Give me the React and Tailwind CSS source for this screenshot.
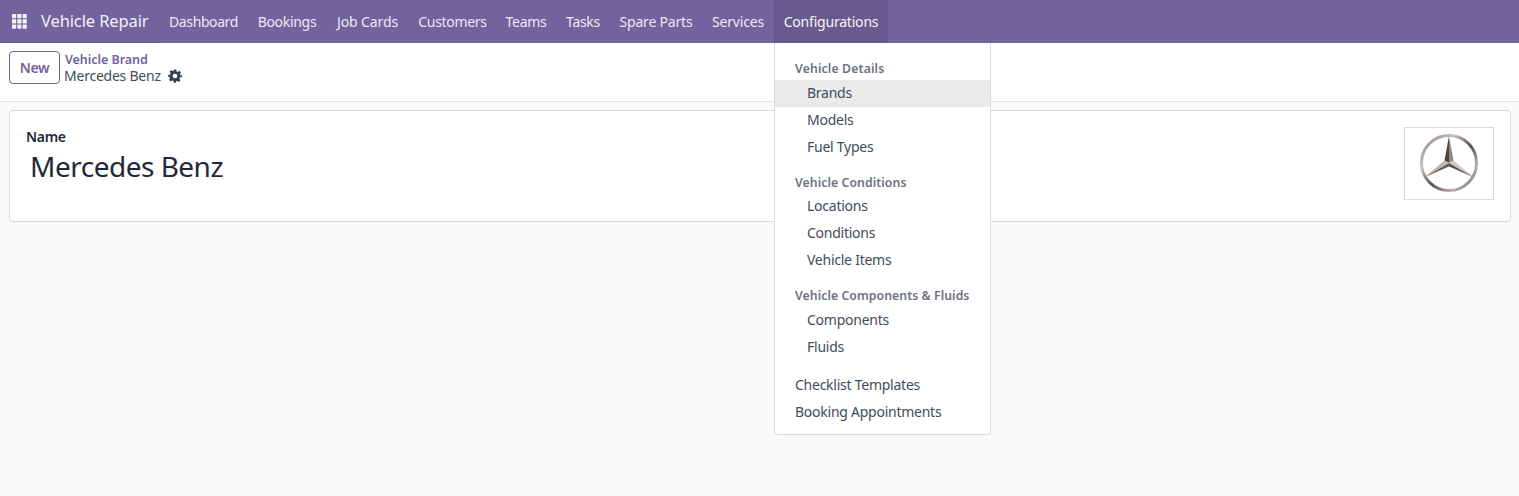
import React from "react";

const navItems = [
  ["Dashboard", "w-[89px] tracking-[-0.4px]"],
  ["Bookings", "w-[78px] tracking-[-0.3px]"],
  ["Job Cards", "w-[83px] tracking-[-0.1px]"],
  ["Customers", "w-[87px] tracking-[-0.3px]"],
  ["Teams", "w-[60px] tracking-[-0.3px]"],
  ["Tasks", "w-[54px] tracking-[-0.3px]"],
  ["Spare Parts", "w-[92px] tracking-[-0.2px]"],
  ["Services", "w-[72px] tracking-[-0.2px]"],
];

function Row({ children, active, sub }) {
  return (
    <div className={`h-[27px] flex items-center pb-[2px] text-[14px] tracking-[-0.25px] text-[#434c5a] ${sub ? "pl-[32px]" : "pl-[20px]"} ${active ? "bg-[#eaeaea]" : ""}`}>
      {children}
    </div>
  );
}

function Header({ children, className }) {
  return <div className={`flex items-center pl-[20px] text-[12.25px] font-semibold text-[#6b7280] ${className}`}>{children}</div>;
}

function Logo() {
  return (
    <svg width="62" height="62" viewBox="0 0 62 62">
      <defs>
        <linearGradient id="ring" x1="0" y1="0" x2="1" y2="1">
          <stop offset="0" stopColor="#8f837d" />
          <stop offset="0.3" stopColor="#c9c3bf" />
          <stop offset="0.55" stopColor="#544a46" />
          <stop offset="0.78" stopColor="#bdb6b2" />
          <stop offset="1" stopColor="#4f4642" />
        </linearGradient>
        <filter id="soft" x="-5%" y="-5%" width="110%" height="110%">
          <feGaussianBlur stdDeviation="0.35" />
        </filter>
      </defs>
      <g filter="url(#soft)">
        <circle cx="31" cy="30" r="27.5" fill="none" stroke="url(#ring)" strokeWidth="3" />
        <polygon points="31,3 26.500,27.500 31,30" fill="#4f4541" />
        <polygon points="31,3 35.500,27.500 31,30" fill="#93867f" />
        <polygon points="6,44.500 26.500,27.500 31,30" fill="#c2b9b4" />
        <polygon points="6,44.500 31,30 31,33.500" fill="#6a5f5a" />
        <polygon points="56,44.500 35.500,27.500 31,30" fill="#cfc7c3" />
        <polygon points="56,44.500 31,30 31,33.500" fill="#5f5550" />
      </g>
    </svg>
  );
}

export default function App() {
  return (
    <div className="relative h-[496px] w-full overflow-hidden bg-[#f9fafb] font-['Noto_Sans',sans-serif] text-[14px] text-[#374151]">
      <nav className="h-[43px] flex items-stretch bg-[#71639e] text-white">
        <div className="w-[159px] flex items-stretch border-b border-[#665a8e]">
          <div className="w-[41px] flex items-center pl-[12px]">
            <svg width="15" height="15" viewBox="0 0 15 15" fill="#ffffff" fillOpacity="0.9">
              {[0, 5.3, 10.6].flatMap((y) => [0, 5.3, 10.6].map((x) => <rect key={`${x}-${y}`} x={x} y={y} width="4.2" height="4.2" rx="0.5" />))}
            </svg>
          </div>
          <div className="flex items-center text-[16.5px] text-[#f3f1f7] tracking-[-0.12px]">Vehicle Repair</div>
        </div>
        {navItems.map(([n, c]) => (
          <div key={n} className={`flex items-center justify-center text-[#ece9f2] ${c}`}>{n}</div>
        ))}
        <div className="flex items-center justify-center w-[114px] bg-[#665a8e] text-[#f6f5f9] tracking-[-0.2px]">Configurations</div>
      </nav>

      <div className="h-[59px] bg-white border-b border-[#dee2e6] flex items-start pl-[9px] pt-[8px]">
        <button className="w-[51px] h-[33px] rounded-[4px] border border-[#71639e] text-[#71639e] font-semibold text-[14px] tracking-[-0.3px]">New</button>
        <div className="ml-[5px] mt-[1px]">
          <div className="h-[16px] leading-[16px] text-[#71639e] font-semibold text-[12.5px] tracking-[-0.05px]">Vehicle Brand</div>
          <div className="h-[15px] leading-[15px] -ml-[1px] flex items-center text-[14px] tracking-[-0.23px] text-[#434c5a]">
            Mercedes Benz
            <svg className="ml-[7px]" width="14" height="14" viewBox="0 0 24 24" fill="#374151">
              <path fillRule="evenodd" d="M10 1h4l.7 3.2 1.900.8 2.800-1.800 2.800 2.800-1.800 2.800.8 1.900L23.500 10v4l-3.200.7-.8 1.900 1.800 2.800-2.800 2.800-2.800-1.800-1.900.8L13.900 23.500h-4l-.7-3.200-1.900-.8-2.800 1.800-2.800-2.800 1.800-2.800-.8-1.900L.5 14v-4l3.200-.7.8-1.900L2.700 4.600l2.800-2.800 2.800 1.800 1.900-.8zM12 8a4 4 0 1 0 0 8 4 4 0 0 0 0-8z" />
            </svg>
          </div>
        </div>
      </div>

      <div className="mr-[8px] mt-[8px] h-[112px] ml-[9px] bg-white border border-[#d8dadd] rounded-[4px] flex justify-between pl-[16px] pr-[16px] pt-[16px]">
        <div>
          <div className="font-semibold text-[14px] leading-[20px] text-[#1f2937] tracking-[-0.3px]">Name</div>
          <div className="ml-[4px] mt-[2px] text-[28px] leading-[34px] text-[#1f2937] tracking-[-0.5px]">Mercedes Benz</div>
        </div>
        <div className="w-[90px] h-[73px] border border-[#d8dadd] flex items-center justify-center">
          <Logo />
        </div>
      </div>

      <div className="absolute left-[774px] top-[43px] w-[217px] h-[392px] bg-white border border-[#d8dadd] border-t-0 rounded-b-[4px] pt-[15px]">
        <Header className="h-[22px] tracking-[0.15px]">Vehicle Details</Header>
        <Row sub active>Brands</Row>
        <Row sub>Models</Row>
        <Row sub>Fuel Types</Row>
        <Header className="mt-[12px] h-[20px] tracking-[0.08px]">Vehicle Conditions</Header>
        <Row sub>Locations</Row>
        <Row sub>Conditions</Row>
        <Row sub>Vehicle Items</Row>
        <Header className="mt-[12px] h-[21px] tracking-[0.07px]">Vehicle Components &amp; Fluids</Header>
        <Row sub>Components</Row>
        <Row sub>Fluids</Row>
        <div className="mt-[11px]"><Row>Checklist Templates</Row></div>
        <Row>Booking Appointments</Row>
      </div>
    </div>
  );
}
